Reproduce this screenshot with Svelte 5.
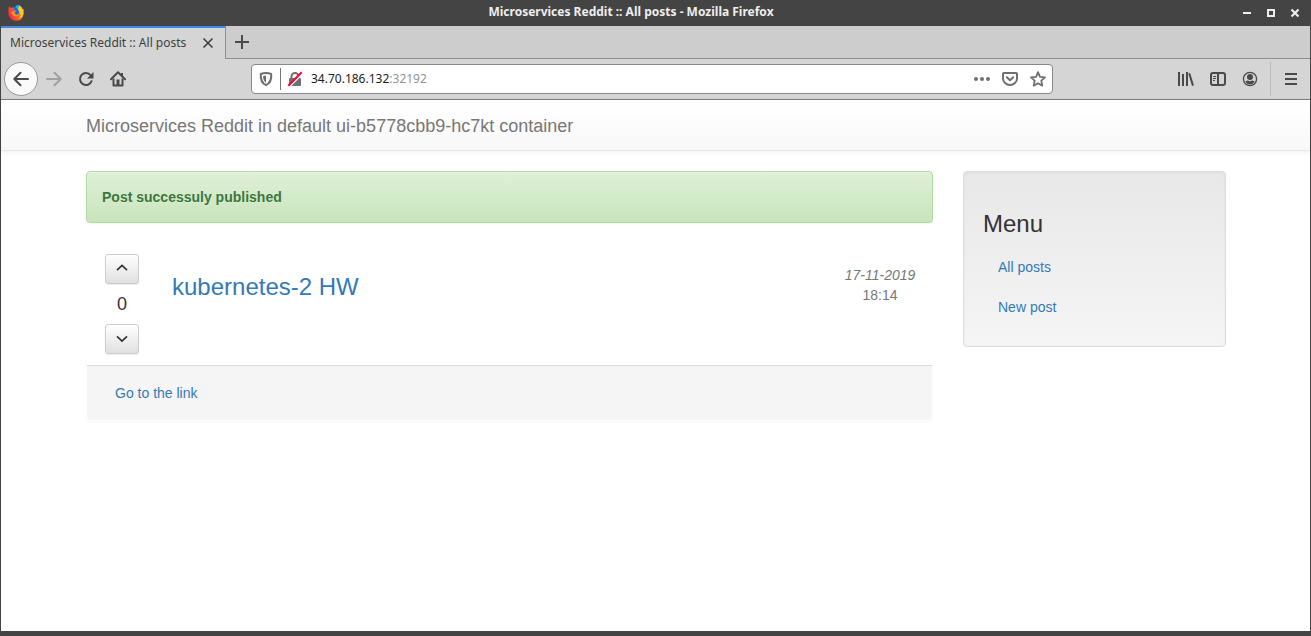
<script>
  const pageTitle = 'Microservices Reddit :: All posts';
  let score = $state(0);
</script>

<div class="window">
  <header class="titlebar">
    <svg class="fox" viewBox="0 0 16 16" width="16" height="16" aria-hidden="true">
      <defs>
        <linearGradient id="flame" x1="0" y1="0.6" x2="1" y2="0.2">
          <stop offset="0" stop-color="#f5234f" />
          <stop offset="0.5" stop-color="#ff6a20" />
          <stop offset="1" stop-color="#ffcf1f" />
        </linearGradient>
      </defs>
      <path d="M1 1.200Q1.800 2.400 3.200 2.800 4.400 2.200 5.800 2.500L11 .2Q14 1.800 14.400 4L15.200 3.400Q16.200 7 15.300 10.500 13.600 15.800 8 15.800 2.200 15.500.6 10-.2 6 1 1.200Z" fill="url(#flame)" />
      <path d="M5.800 2.500Q8 0 11 .2 11.200 2.500 10 4.400 11.800 6 11 8.300 9.500 10.500 7 9.300L6.500 8 8.200 6.800 8 5.400 6 4.700Q5.200 3.700 5.800 2.500Z" fill="#0a72e8" />
      <path d="M7.500 1.200Q9-.1 11 .2 11.200 2.500 10 4.400L8.500 3Z" fill="#19b5f5" />
      <path d="M11 .2Q14 1.800 14.600 5 16 11 11.700 13.500 13.800 9 11.300 6.500 10.800 5.200 10 4.400 11.200 2.500 11 .2Z" fill="#ffcb22" />
      <path d="M3 6.500L6.300 6.300 6.500 8.500Q8 11 10.800 9.300 9 12.700 5.500 10.800 3.500 9.500 3 6.500Z" fill="#ff9424" />
    </svg>
    <div class="caption">{pageTitle} - Mozilla Firefox</div>
    <div class="controls">
      <button aria-label="Minimize"><svg viewBox="0 0 10 10" width="10" height="10"><path d="M1 5h8" stroke-width="2" /></svg></button>
      <button aria-label="Maximize"><svg viewBox="0 0 10 10" width="10" height="10"><path d="M2 2h6v6H2z" stroke-width="2" /></svg></button>
      <button aria-label="Close"><svg viewBox="0 0 10 10" width="10" height="10"><path d="M1.500 1.500l7 7M8.500 1.500l-7 7" stroke-width="2.200" /></svg></button>
    </div>
  </header>

  <div class="tabs">
    <div class="tab">
      <span>{pageTitle}</span>
      <button aria-label="Close tab"><svg viewBox="0 0 12 12" width="12" height="12"><path d="M1.500 1.500l9 9M10.500 1.500l-9 9" stroke-width="1.600" /></svg></button>
    </div>
    <button class="newtab" aria-label="New tab"><svg viewBox="0 0 16 16" width="16" height="16"><path d="M8 1v14M1 8h14" stroke-width="2" /></svg></button>
  </div>

  <div class="toolbar">
    <nav class="history" aria-label="Browser navigation">
      <button class="back" aria-label="Back"><svg viewBox="0 0 16 16" width="16" height="16"><path d="M15 8H1.500M7.500 1.800L1.300 8l6.200 6.200" stroke-width="2" stroke-linecap="round" stroke-linejoin="round" /></svg></button>
      <button class="dim" aria-label="Forward" disabled><svg viewBox="0 0 16 16" width="16" height="16"><path d="M1 8h13.500M8.500 1.800L14.700 8l-6.200 6.200" stroke-width="2" stroke-linecap="round" stroke-linejoin="round" /></svg></button>
      <button aria-label="Reload"><svg viewBox="0 0 16 16" width="16" height="16"><path d="M13.600 10.200A6 6 0 1 1 12.600 4.200" stroke-width="2" stroke-linecap="round" /><path class="solid" d="M15.500 1v6.500H9z" /></svg></button>
      <button aria-label="Home"><svg viewBox="0 0 16 16" width="16" height="16"><path d="M1 8.300L8 1.300l7 7" stroke-width="2" stroke-linecap="round" stroke-linejoin="round" /><path d="M3.500 7.500V14.500H12.500V7.500" stroke-width="2" stroke-linejoin="round" /><path class="solid" d="M6.500 8.500h3V14h-3z" /><path class="solid" d="M11 2h2v3h-2z" /></svg></button>
    </nav>

    <div class="address">
      <svg viewBox="0 0 16 16" width="16" height="16" aria-hidden="true"><path d="M8 2C6.300 2 4.300 2.400 2.800 3 2.300 8.500 4 12.200 8 14.200 12 12.200 13.700 8.500 13.200 3 11.700 2.400 9.700 2 8 2Z" stroke-width="2" stroke-linejoin="round" /><path class="solid" d="M8 4.500v7.200C6 10.300 5 8.200 5 5.200 6 4.700 7 4.500 8 4.500Z" /></svg>
      <span class="rule"></span>
      <svg viewBox="0 0 16 16" width="16" height="16" aria-hidden="true"><path d="M4.500 8V5.500a3.500 3.500 0 0 1 7 0V8" stroke-width="2" /><path class="solid" d="M3 7h10q1 0 1 1v6q0 1-1 1H3q-1 0-1-1V8q0-1 1-1z" /><path d="M2.500 15.800L15.800 2.500" stroke="#fff" stroke-width="1.500" /><path d="M1.300 14.700L14.700 1.300" stroke="#ff0039" stroke-width="2" /></svg>
      <span class="url">34.70.186.132<span>:32192</span></span>
      <button aria-label="Page actions"><svg viewBox="0 0 16 16" width="16" height="16"><g class="solid"><circle cx="2" cy="8" r="2" /><circle cx="8" cy="8" r="2" /><circle cx="14" cy="8" r="2" /></g></svg></button>
      <button aria-label="Save to Pocket"><svg viewBox="0 0 16 16" width="16" height="16"><path d="M1.800 2h12.400q.8 0 .8.800V7.500A7 6.500 0 0 1 1 7.500V2.800Q1 2 1.800 2Z" stroke-width="2" /><path d="M4.800 6.200L8 9.200l3.200-3" stroke-width="2" stroke-linecap="round" stroke-linejoin="round" /></svg></button>
      <button aria-label="Bookmark"><svg viewBox="0 0 16 16" width="16" height="16"><path d="M8 1.200L10 5.800l5 .5-3.700 3.400 1 5L8 12.200l-4.300 2.500 1-5L1 6.300l5-.5Z" stroke-width="1.800" stroke-linejoin="round" /></svg></button>
    </div>

    <div class="tools">
      <button aria-label="Library"><svg viewBox="0 0 16 16" width="16" height="16"><path d="M1 1v14M5 3v12M9 1v14M11.200 2.300L15 14.600" stroke-width="2" /></svg></button>
      <button aria-label="Sidebars"><svg viewBox="0 0 16 16" width="16" height="16"><rect x="1" y="2" width="14" height="12" rx="2" stroke-width="2" /><path d="M8 2v12" stroke-width="2" /><path d="M3 5.500h3M3 7.500h3M3 9.500h2" stroke-width="1" /></svg></button>
      <button aria-label="Account"><svg viewBox="0 0 16 16" width="16" height="16"><circle cx="8" cy="8" r="6.600" stroke-width="1.300" /><circle class="solid" cx="8" cy="6" r="3" /><path class="solid" d="M3.300 10.500Q5 9.500 6 9.500 8 11 10 9.500 11 9.500 12.700 10.500 11 13.500 8 13.500 5 13.500 3.300 10.500Z" /></svg></button>
      <span class="split"></span>
      <button aria-label="Open menu"><svg viewBox="0 0 16 16" width="16" height="16"><path d="M2 3h12M2 8h12M2 13h12" stroke-width="2" /></svg></button>
    </div>
  </div>

  <div class="page">
    <nav class="navbar">
      <div class="container"><a class="brand" href="#home">Microservices Reddit in default ui-b5778cbb9-hc7kt container</a></div>
    </nav>

    <div class="container grid">
      <main>
        <div class="alert" role="status">Post successuly published</div>
        <article>
          <div class="post">
            <div class="votes">
              <button aria-label="Vote up" onclick={() => score++}><svg viewBox="0 0 14 14" width="14" height="14"><path d="M2 8.200l5-4.700 5 4.700" stroke-width="1.700" /></svg></button>
              <span>{score}</span>
              <button aria-label="Vote down" onclick={() => score--}><svg viewBox="0 0 14 14" width="14" height="14"><path d="M2 4.300L7 9l5-4.700" stroke-width="1.700" /></svg></button>
            </div>
            <h3><a href="#post">kubernetes-2 HW</a></h3>
            <div class="date"><em>17-11-2019</em><span>18:14</span></div>
          </div>
          <footer><a href="#link">Go to the link</a></footer>
        </article>
      </main>

      <aside>
        <h3>Menu</h3>
        <a href="#all">All posts</a>
        <a href="#new">New post</a>
      </aside>
    </div>
  </div>
</div>

<style>
  :global(body) { margin: 0; background: #444; }
  * { box-sizing: border-box; }
  svg { display: block; flex: none; fill: none; stroke: currentColor; }
  .fox, .solid { stroke: none; }
  .solid { fill: currentColor; }
  button { border: 0; padding: 0; background: none; color: inherit; display: flex; align-items: center; justify-content: center; }
  a { color: #337ab7; text-decoration: none; }
  h3 { margin: 0; font-size: 24px; line-height: 26px; font-weight: 500; }
  .window {
    min-height: 100vh; display: flex; flex-direction: column;
    border: solid #444; border-width: 0 1px 5px; background: #fff;
    font-family: "Noto Sans", sans-serif; font-size: 12px; line-height: 16px; color: #4a4a4a;
  }

  .titlebar { height: 26px; background: #444; color: #eee; display: grid; grid-template-columns: 64px 1fr 64px; align-items: center; padding: 0 10px 0 7px; }
  .caption { text-align: center; font-weight: 700; padding: 0 46px 2px 0; }
  .controls { display: flex; justify-content: flex-end; gap: 14px; }

  .tabs { height: 33px; display: flex; background: #cdcdcd; border-bottom: 1px solid #8f8f8f; }
  .tab { width: 225px; margin-bottom: -1px; padding: 0 11px 2px 9px; background: #d5d5d5; border-top: 2px solid #3b8ce0; border-right: 1px solid #8f8f8f; display: flex; align-items: center; justify-content: space-between; color: #3f3f3f; }
  .newtab { width: 32px; }

  .toolbar { height: 41px; background: #d5d5d5; border-bottom: 1px solid #7f7f7f; display: grid; grid-template-columns: 250px 1fr 257px; align-items: center; }
  .history { display: flex; align-items: center; padding-left: 3px; }
  .history button { width: 32px; height: 32px; }
  .history .back { width: 34px; height: 34px; border: 1px solid #999; border-radius: 50%; background: #fafafa; }
  .history .dim { color: #a0a0a0; }
  .address { height: 30px; display: flex; align-items: center; gap: 12px; padding: 0 6px; border: 1px solid #8a8a8a; border-radius: 4px; background: #fff; color: #6f6f6f; }
  .rule { width: 1px; height: 22px; margin: 0 -6px; background: #777; }
  .url { flex: 1; margin-left: -4px; color: #222; }
  .url span { color: #949494; }
  .tools { display: flex; align-items: center; justify-content: flex-end; padding-right: 11px; gap: 16px; }
  .split { width: 1px; height: 34px; margin: 0 -4px; background: #bababa; }

  .page { flex: 1; font-family: "Liberation Sans", Arial, sans-serif; font-size: 14px; line-height: 20px; color: #333; }
  .container { max-width: 1169px; margin: 0 auto; padding: 0 14px 0 15px; }
  .navbar { height: 51px; border-bottom: 1px solid #e7e7e7; background: linear-gradient(#fff, #f8f8f8); box-shadow: 0 1px 5px rgba(0, 0, 0, 0.075); }
  .brand { display: block; padding-top: 16px; color: #777; font-size: 18px; line-height: 20px; }
  .grid { display: grid; grid-template-columns: 1fr 263px; gap: 30px; align-items: start; padding-top: 20px; }
  .alert { padding: 15px; border: 1px solid #b2dba1; border-radius: 4px; background: linear-gradient(#dff0d8, #c8e5bc); box-shadow: inset 0 1px 0 rgba(255, 255, 255, 0.25), 0 1px 2px rgba(0, 0, 0, 0.05); color: #3c763d; font-weight: 700; text-shadow: 0 1px 0 rgba(255, 255, 255, 0.2); }
  article { margin-top: 20px; border: 1px solid transparent; border-radius: 4px; box-shadow: 0 1px 2px rgba(0, 0, 0, 0.05); }
  .post { display: grid; grid-template-columns: 34px 1fr 74px; align-items: start; padding: 10px 15px 11px 18px; }
  .post h3 { padding: 20px 0 0 33px; }
  .votes { display: flex; flex-direction: column; align-items: center; gap: 10px; font-size: 18px; }
  .votes button { width: 34px; height: 30px; border: 1px solid #ccc; border-radius: 3px; background: linear-gradient(#fff, #e0e0e0); box-shadow: inset 0 1px 0 rgba(255, 255, 255, 0.15), 0 1px 1px rgba(0, 0, 0, 0.075); }
  .date { display: flex; flex-direction: column; align-items: center; padding-top: 11px; color: #777; }
  footer { padding: 17px 28px; border-top: 1px solid #ddd; border-radius: 0 0 3px 3px; background: #f5f5f5; }
  aside { display: flex; flex-direction: column; padding: 39px 19px 19px; border: 1px solid #dcdcdc; border-radius: 4px; background: linear-gradient(#e8e8e8, #f5f5f5); box-shadow: inset 0 1px 3px rgba(0, 0, 0, 0.05), 0 1px 0 rgba(255, 255, 255, 0.1); }
  aside h3 { padding-bottom: 10px; }
  aside a { padding: 10px 15px; }
</style>
